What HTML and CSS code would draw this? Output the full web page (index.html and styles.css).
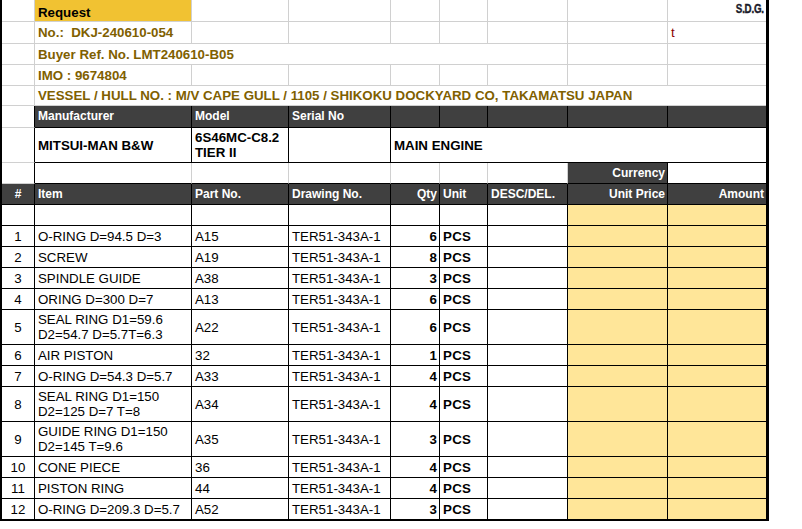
FILE: index.html
```html
<!DOCTYPE html>
<html>
<head>
<meta charset="utf-8">
<link rel="stylesheet" href="styles.css">
</head>
<body>
<div class="sheet">
  <!-- row 0 -->
  <div class="c g"></div>
  <div class="c g req">Request</div>
  <div class="c g"></div><div class="c g"></div><div class="c g"></div><div class="c g"></div><div class="c g"></div><div class="c g"></div>
  <div class="c g last r"><span class="sdg">S.D.G.</span></div>
  <!-- row 1 -->
  <div class="c g"></div>
  <div class="c g top pre">No.:  DKJ-240610-054</div>
  <div class="c g"></div><div class="c g"></div><div class="c g"></div><div class="c g"></div><div class="c g"></div><div class="c g"></div>
  <div class="c g last tee">t</div>
  <!-- row 2 -->
  <div class="c g"></div>
  <div class="c g top span6">Buyer Ref. No. LMT240610-B05</div>
  <div class="c g"></div>
  <div class="c g last"></div>
  <!-- row 3 -->
  <div class="c g"></div>
  <div class="c g top">IMO : 9674804</div>
  <div class="c g"></div><div class="c g"></div><div class="c g"></div><div class="c g"></div><div class="c g"></div><div class="c g"></div>
  <div class="c g last"></div>
  <!-- row 4 -->
  <div class="c g"></div>
  <div class="c g last top span8">VESSEL / HULL NO. : M/V CAPE GULL / 1105 / SHIKOKU DOCKYARD CO, TAKAMATSU JAPAN</div>
  <!-- row 5 -->
  <div class="c g kr"></div>
  <div class="c dk">Manufacturer</div>
  <div class="c dk">Model</div>
  <div class="c dk">Serial No</div>
  <div class="c dk"></div><div class="c dk"></div><div class="c dk"></div><div class="c dk"></div>
  <div class="c dk last"></div>
  <!-- row 6 -->
  <div class="c g kr"></div>
  <div class="c k b">MITSUI-MAN B&amp;W</div>
  <div class="c k b wrap">6S46MC-C8.2 TIER II</div>
  <div class="c k"></div>
  <div class="c k last b span5">MAIN ENGINE</div>
  <!-- row 7 -->
  <div class="c g kr"></div>
  <div class="c g kb"></div><div class="c g kb"></div><div class="c g kb"></div><div class="c g kb"></div><div class="c g kb"></div><div class="c g kb"></div>
  <div class="c dk r">Currency</div>
  <div class="c k last"></div>
  <!-- row 8 header -->
  <div class="c dk ctr">#</div>
  <div class="c dk">Item</div>
  <div class="c dk">Part No.</div>
  <div class="c dk">Drawing No.</div>
  <div class="c dk r">Qty</div>
  <div class="c dk">Unit</div>
  <div class="c dk">DESC/DEL.</div>
  <div class="c dk r">Unit Price</div>
  <div class="c dk last r">Amount</div>
  <!-- row 9 blank -->
  <div class="c k"></div><div class="c k"></div><div class="c k"></div><div class="c k"></div><div class="c k"></div><div class="c k"></div><div class="c k"></div>
  <div class="c k y"></div><div class="c k y last"></div>

  <div class="c k ctr">1</div><div class="c k">O-RING D=94.5 D=3</div><div class="c k">A15</div><div class="c k">TER51-343A-1</div><div class="c k r b">6</div><div class="c k b pcs">PCS</div><div class="c k"></div><div class="c k y"></div><div class="c k y last"></div>
  <div class="c k ctr">2</div><div class="c k">SCREW</div><div class="c k">A19</div><div class="c k">TER51-343A-1</div><div class="c k r b">8</div><div class="c k b pcs">PCS</div><div class="c k"></div><div class="c k y"></div><div class="c k y last"></div>
  <div class="c k ctr">3</div><div class="c k">SPINDLE GUIDE</div><div class="c k">A38</div><div class="c k">TER51-343A-1</div><div class="c k r b">3</div><div class="c k b pcs">PCS</div><div class="c k"></div><div class="c k y"></div><div class="c k y last"></div>
  <div class="c k ctr">4</div><div class="c k">ORING D=300 D=7</div><div class="c k">A13</div><div class="c k">TER51-343A-1</div><div class="c k r b">6</div><div class="c k b pcs">PCS</div><div class="c k"></div><div class="c k y"></div><div class="c k y last"></div>
  <div class="c k ctr">5</div><div class="c k wrap">SEAL RING D1=59.6<br>D2=54.7 D=5.7T=6.3</div><div class="c k">A22</div><div class="c k">TER51-343A-1</div><div class="c k r b">6</div><div class="c k b pcs">PCS</div><div class="c k"></div><div class="c k y"></div><div class="c k y last"></div>
  <div class="c k ctr">6</div><div class="c k">AIR PISTON</div><div class="c k">32</div><div class="c k">TER51-343A-1</div><div class="c k r b">1</div><div class="c k b pcs">PCS</div><div class="c k"></div><div class="c k y"></div><div class="c k y last"></div>
  <div class="c k ctr">7</div><div class="c k">O-RING D=54.3 D=5.7</div><div class="c k">A33</div><div class="c k">TER51-343A-1</div><div class="c k r b">4</div><div class="c k b pcs">PCS</div><div class="c k"></div><div class="c k y"></div><div class="c k y last"></div>
  <div class="c k ctr">8</div><div class="c k wrap">SEAL RING D1=150<br>D2=125 D=7 T=8</div><div class="c k">A34</div><div class="c k">TER51-343A-1</div><div class="c k r b">4</div><div class="c k b pcs">PCS</div><div class="c k"></div><div class="c k y"></div><div class="c k y last"></div>
  <div class="c k ctr">9</div><div class="c k wrap">GUIDE RING D1=150<br>D2=145 T=9.6</div><div class="c k">A35</div><div class="c k">TER51-343A-1</div><div class="c k r b">3</div><div class="c k b pcs">PCS</div><div class="c k"></div><div class="c k y"></div><div class="c k y last"></div>
  <div class="c k ctr">10</div><div class="c k">CONE PIECE</div><div class="c k">36</div><div class="c k">TER51-343A-1</div><div class="c k r b">4</div><div class="c k b pcs">PCS</div><div class="c k"></div><div class="c k y"></div><div class="c k y last"></div>
  <div class="c k ctr">11</div><div class="c k">PISTON RING</div><div class="c k">44</div><div class="c k">TER51-343A-1</div><div class="c k r b">4</div><div class="c k b pcs">PCS</div><div class="c k"></div><div class="c k y"></div><div class="c k y last"></div>
  <div class="c k ctr bot">12</div><div class="c k bot">O-RING D=209.3 D=5.7</div><div class="c k bot">A52</div><div class="c k bot">TER51-343A-1</div><div class="c k r b bot">3</div><div class="c k b pcs bot">PCS</div><div class="c k bot"></div><div class="c k y bot"></div><div class="c k y last bot"></div>
</div>
</body>
</html>
```
FILE: styles.css
```css
html, body {
  margin: 0;
  padding: 0;
  background: #ffffff;
}

body {
  font-family: "Liberation Sans", Arial, sans-serif;
  font-size: 13.3px;
  color: #000000;
}

.sheet {
  display: grid;
  grid-template-columns: 33px 157px 97px 102px 49px 48px 80px 100px 98px;
  grid-template-rows: 22px 22px 21px 21px 20px 22px 35px 21px 21px 21px 21px 21px 21px 21px 35px 21px 21px 35px 35px 21px 21px 22px;
  width: max-content;
  border-left: 2px solid #000000;
  border-right: 3px solid #000000;
}

.c {
  box-sizing: border-box;
  display: flex;
  align-items: center;
  padding: 0 2px 0 3px;
  border-right: 1px solid #000000;
  border-bottom: 1px solid #000000;
  white-space: nowrap;
  line-height: 15px;
  min-width: 0;
}

.g {
  border-color: #d0d0d0;
}

.k {
  border-color: #000000;
}

.kr {
  border-right-color: #000000;
}

.kb {
  border-bottom-color: #000000;
}

.last {
  border-right: none;
}

.r {
  justify-content: flex-end;
}

.ctr {
  justify-content: center;
  padding: 0;
}

.b {
  font-weight: bold;
}

.wrap {
  white-space: normal;
}

.pre {
  white-space: pre;
}

.req {
  background: #f1c232;
  font-weight: bold;
  padding-top: 3px;
}

.top {
  font-weight: bold;
  color: #7f6000;
}

.span5 {
  grid-column: span 5;
}

.span6 {
  grid-column: span 6;
}

.span8 {
  grid-column: span 8;
}

.sdg {
  display: inline-block;
  font-weight: bold;
  font-size: 12.5px;
  color: #1a1a2a;
  transform: scale(0.78, 0.95);
  transform-origin: right center;
  margin-bottom: 2px;
  letter-spacing: -0.3px;
  -webkit-text-stroke: 0.4px #1a1a2a;
}

.tee {
  color: #8b0000;
  padding-left: 3px;
}

.dk {
  background: #404040;
  color: #ffffff;
  font-weight: bold;
  font-size: 12px;
  border-color: #000000;
}

.y {
  background: #ffe699;
}

.pcs {
  letter-spacing: 0.3px;
}

.bot {
  border-bottom-width: 2px;
}
```
